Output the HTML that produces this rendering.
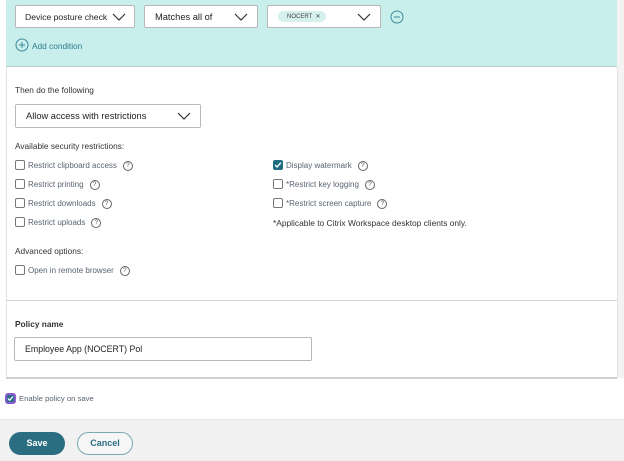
<!DOCTYPE html>
<html><head><meta charset="utf-8">
<style>
*{box-sizing:border-box;margin:0;padding:0}
body{width:624px;height:461px;overflow:hidden;background:#fff;font-family:"Liberation Sans",sans-serif;position:relative;color:#222}
.a{position:absolute}
.teal{left:6px;top:0;width:611px;height:67px;background:#c8efec;border-bottom:1px solid #b9cfcd}
.panel{left:6px;top:67px;width:611px;height:311px;background:#fff;border-left:1px solid #e2e2e2;}
.rside{left:617px;top:0;width:7px;height:378px;background:#f3f3f3}
.sel{position:absolute;background:#fff;border:1px solid #b8b8b8;border-radius:2px;font-size:9.3px;color:#222;padding-left:10px;display:flex;align-items:center}
.sel svg{position:absolute;right:9px;top:50%;margin-top:-4px}
.t{position:absolute;font-size:8.3px;color:#333;white-space:nowrap}
.cb{position:absolute;width:10px;height:10px;border:1px solid #777;border-radius:2px;background:#fff}
.lbl{position:absolute;font-size:8px;color:#5a6470;white-space:nowrap}
.q{display:inline-block;width:10px;height:10px;border:1px solid #666;border-radius:50%;font-size:6.5px;line-height:8px;text-align:center;color:#555;margin-left:6px;vertical-align:middle}
.hr{position:absolute;height:1px;background:#d4d4d4}
</style></head><body>
<div class="a rside"></div>
<div class="a teal"></div>
<div class="a panel"></div>
<div class="hr" style="left:6px;top:300px;width:611px"></div>
<div class="hr" style="left:6px;top:377px;width:611px;height:2px;background:#d0d0d0"></div>
<div class="a" style="left:617px;top:67px;width:1px;height:311px;background:#e2e2e2"></div>

<div class="sel" style="left:15px;top:5px;width:120px;height:23px;font-size:8.6px;padding-left:9px">Device posture check
<svg width="14" height="8" viewBox="0 0 14 8" style="right:8px"><path d="M1 1l6 6 6-6" fill="none" stroke="#333" stroke-width="1.2"/></svg></div>
<div class="sel" style="left:144px;top:5px;width:114px;height:23px">Matches all of
<svg width="14" height="8" viewBox="0 0 14 8"><path d="M1 1l6 6 6-6" fill="none" stroke="#333" stroke-width="1.2"/></svg></div>
<div class="sel" style="left:267px;top:5px;width:114px;height:23px">
<span style="background:#d6f0ee;border-radius:6px;font-size:6px;padding:2px 6px 2px 9px;color:#444;position:absolute;left:10px;top:5px">NOCERT &nbsp;✕</span>
<svg width="14" height="8" viewBox="0 0 14 8"><path d="M1 1l6 6 6-6" fill="none" stroke="#333" stroke-width="1.2"/></svg></div>
<svg class="a" style="left:390px;top:10px" width="14" height="14" viewBox="0 0 14 14"><circle cx="7" cy="7" r="6" fill="none" stroke="#3d8a9a" stroke-width="1"/><path d="M4 7h6" stroke="#3d8a9a"/></svg>
<svg class="a" style="left:15px;top:38px" width="14" height="14" viewBox="0 0 14 14"><circle cx="7" cy="7" r="6" fill="none" stroke="#3d8a9a" stroke-width="1"/><path d="M4 7h6M7 4v6" stroke="#3d8a9a"/></svg>
<div class="t" style="left:32px;top:41px;color:#2d7c8c">Add condition</div>

<div class="t" style="left:15px;top:85px">Then do the following</div>
<div class="sel" style="left:15px;top:104px;width:186px;height:24px">Allow access with restrictions
<svg width="14" height="8" viewBox="0 0 14 8"><path d="M1 1l6 6 6-6" fill="none" stroke="#333" stroke-width="1.2"/></svg></div>
<div class="t" style="left:15px;top:141px">Available security restrictions:</div>

<div class="cb" style="left:15px;top:160px"></div><div class="lbl" style="left:28px;top:161px">Restrict clipboard access<span class="q">?</span></div>
<div class="cb" style="left:15px;top:179px"></div><div class="lbl" style="left:28px;top:180px">Restrict printing<span class="q">?</span></div>
<div class="cb" style="left:15px;top:198px"></div><div class="lbl" style="left:28px;top:199px">Restrict downloads<span class="q">?</span></div>
<div class="cb" style="left:15px;top:217px"></div><div class="lbl" style="left:28px;top:218px">Restrict uploads<span class="q">?</span></div>

<div class="cb" style="left:273px;top:160px;background:#1f6e82;border-color:#1f6e82"><svg width="8" height="8" viewBox="0 0 7 7" style="position:absolute;left:0;top:0"><path d="M1 3.5l1.7 1.7L6 1.5" fill="none" stroke="#fff" stroke-width="1.2"/></svg></div>
<div class="lbl" style="left:286px;top:161px">Display watermark<span class="q">?</span></div>
<div class="cb" style="left:273px;top:179px"></div><div class="lbl" style="left:286px;top:180px">*Restrict key logging<span class="q">?</span></div>
<div class="cb" style="left:273px;top:198px"></div><div class="lbl" style="left:286px;top:199px">*Restrict screen capture<span class="q">?</span></div>
<div class="t" style="left:273px;top:218px;color:#333;font-size:8.4px">*Applicable to Citrix Workspace desktop clients only.</div>

<div class="t" style="left:15px;top:246px">Advanced options:</div>
<div class="cb" style="left:15px;top:265px"></div><div class="lbl" style="left:28px;top:266px">Open in remote browser<span class="q">?</span></div>

<div class="t" style="left:15px;top:319px;font-weight:bold;color:#333">Policy name</div>
<div class="sel" style="left:14px;top:337px;width:298px;height:24px;font-size:8.8px">Employee App (NOCERT) Pol</div>

<div class="a" style="left:5px;top:393px;width:11px;height:11px;border:2px solid #8a5bd0;border-radius:3px;background:#2a6e84"><svg width="7" height="7" viewBox="0 0 7 7" style="position:absolute;left:0;top:0"><path d="M1 3.5l1.7 1.7L6 1.5" fill="none" stroke="#fff" stroke-width="1.2"/></svg></div>
<div class="lbl" style="left:19px;top:394px;font-size:7.7px">Enable policy on save</div>

<div class="a" style="left:0;top:419px;width:624px;height:42px;background:#f1f1f1;border-top:1px solid #e4e4e4"></div>
<div class="a" style="left:9px;top:432px;width:56px;height:23px;border-radius:12px;background:#2b6e82;color:#fff;font-size:9px;font-weight:bold;text-align:center;line-height:23px">Save</div>
<div class="a" style="left:77px;top:432px;width:56px;height:23px;border-radius:12px;border:1px solid #7aa8b4;background:#f6f6f6;color:#2b6e82;font-size:9px;font-weight:bold;text-align:center;line-height:21px">Cancel</div>
</body></html>
